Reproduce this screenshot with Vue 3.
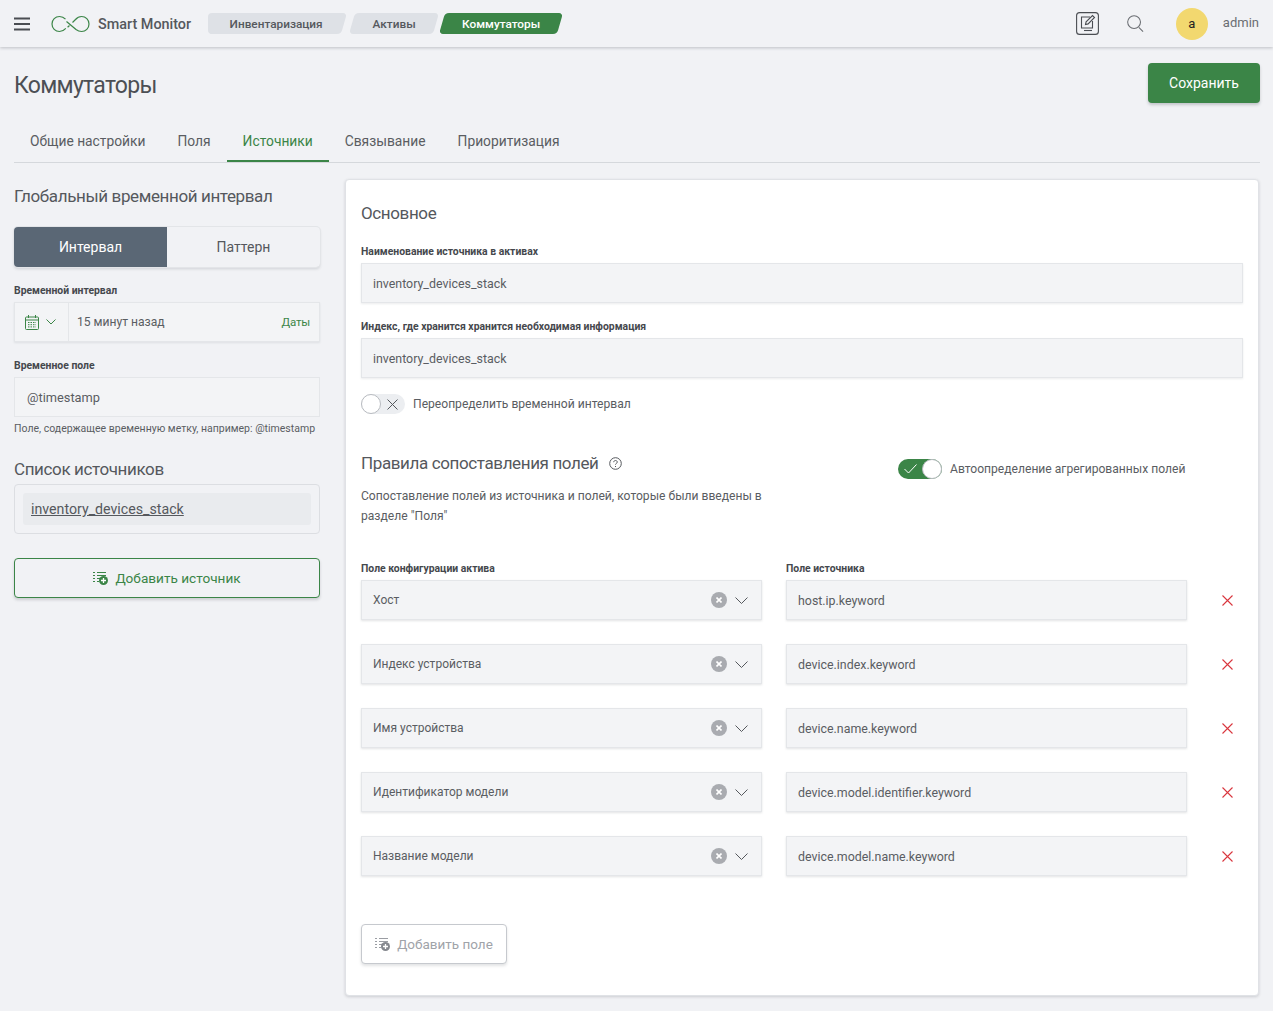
<script setup>
const tabs = ['Общие настройки', 'Поля', 'Источники', 'Связывание', 'Приоритизация']
const rows = [
  ['Хост', 'host.ip.keyword'],
  ['Индекс устройства', 'device.index.keyword'],
  ['Имя устройства', 'device.name.keyword'],
  ['Идентификатор модели', 'device.model.identifier.keyword'],
  ['Название модели', 'device.model.name.keyword'],
]
</script>

<template>
  <div class="page">
    <header class="topbar">
      <svg class="burger" width="16" height="14" viewBox="0 0 16 14"><path d="M0 1.500h16M0 7h16M0 12.500h16" stroke="#4a4d52" stroke-width="2"/></svg>
      <svg class="logo" width="41" height="18" viewBox="0 0 41 18" fill="none" stroke="#3b8547" stroke-width="1.200"><path d="M14.500 4.200C12.800 2.300 10.700 1.500 8.500 1.500 4.300 1.500 1 4.800 1 9s3.300 7.500 7.500 7.500c2.500 0 4.500-1.200 6.300-3.200"/><path d="M15.500 6.500l9.500 8c1.900 1.500 3.600 2 5.600 2 4.100 0 7.400-3.300 7.400-7.500S34.700 1.500 30.600 1.500c-2.500 0-4.400 1-6.100 3l-3 3"/><path d="M18.500 10.500l-1.900 1.800"/></svg>
      <span class="brand">Smart Monitor</span>
      <nav class="crumbs">
        <span class="crumb first">Инвентаризация</span>
        <span class="crumb mid">Активы</span>
        <span class="crumb active">Коммутаторы</span>
      </nav>
      <div class="top-right">
        <svg width="23" height="23" viewBox="0 0 23 23" fill="none" stroke="#4a4d52" stroke-width="1.100"><rect x=".6" y=".6" width="21.800" height="21.800" rx="3"/><path d="M14 5H5.500v11h11V9"/><path d="M9.500 12.500l.6-2.600 6.400-6.400 2 2-6.400 6.400z"/><path d="M8 18.500h8"/></svg>
        <svg class="search" width="17" height="17" viewBox="0 0 18 18" fill="none" stroke="#6a6d72" stroke-width="1.100"><circle cx="7.500" cy="7.500" r="6.800"/><path d="M12.500 13l4.500 4.500"/></svg>
        <span class="avatar">a</span>
        <span class="admin">admin</span>
      </div>
    </header>

    <main class="content">
      <div class="title-row">
        <h1>Коммутаторы</h1>
        <button class="save">Сохранить</button>
      </div>
      <div class="tabs">
        <span v-for="t in tabs" :key="t" class="tab" :class="{ on: t === 'Источники' }">{{ t }}</span>
      </div>

      <div class="columns">
        <aside class="left">
          <h2 class="side-head">Глобальный временной интервал</h2>
          <div class="segment">
            <span class="seg on">Интервал</span>
            <span class="seg">Паттерн</span>
          </div>
          <label class="lbl l1">Временной интервал</label>
          <div class="field picker">
            <span class="pick-btn">
              <svg width="14" height="15" viewBox="0 0 14 15" fill="none" stroke="#3b8547"><rect x=".5" y="2" width="13" height="12.500" rx="1"/><path d="M.5 5h13M3.500 0v3M10.500 0v3"/><path d="M3 7.500h8M3 9.700h8M3 11.900h8" stroke-dasharray="1.500 1"/></svg>
              <svg width="10" height="6" viewBox="0 0 10 6" fill="none" stroke="#3b8547"><path d="M.5.500L5 5 9.500.500"/></svg>
            </span>
            <span class="pick-text">15 минут назад</span>
            <span class="dates">Даты</span>
          </div>
          <label class="lbl l2">Временное поле</label>
          <div class="field plain">@timestamp</div>
          <p class="help">Поле, содержащее временную метку, например: @timestamp</p>
          <h2 class="side-head list-head">Список источников</h2>
          <div class="list-box"><div class="list-item"><span>inventory_devices_stack</span></div></div>
          <button class="add-source">
            <svg width="15" height="14" viewBox="0 0 15 14" fill="none" stroke="#3b8547"><path d="M0 1.500h2M4 1.500h9M0 4.500h2M4 4.500h9M0 7.500h2M0 10.500h2M4 7.500h3M4 10.500h2"/><circle cx="10.500" cy="9.500" r="4.500" fill="#3b8547" stroke="none"/><path d="M8 9.500h5M10.500 7v5" stroke="#fff" stroke-width="1.300"/></svg>
            Добавить источник
          </button>
        </aside>

        <section class="panel">
          <h3 class="panel-head">Основное</h3>
          <label class="lbl p1">Наименование источника в активах</label>
          <div class="field wide">inventory_devices_stack</div>
          <label class="lbl p2">Индекс, где хранится хранится необходимая информация</label>
          <div class="field wide">inventory_devices_stack</div>

          <div class="switch-row">
            <span class="switch off">
              <span class="knob"></span>
              <svg width="11" height="11" viewBox="0 0 11 11" fill="none" stroke="#55585d"><path d="M.5.500l10 10M10.500.500l-10 10"/></svg>
            </span>
            <span class="switch-text">Переопределить временной интервал</span>
          </div>

          <div class="rules">
            <div class="rules-left">
              <h3 class="panel-head rules-head">
                Правила сопоставления полей
                <svg width="13" height="13" viewBox="0 0 13 13" fill="none" stroke="#55585d"><circle cx="6.500" cy="6.500" r="5.800"/><path d="M4.700 5.200c0-1 .8-1.700 1.800-1.700s1.800.7 1.800 1.600c0 1.300-1.800 1.300-1.800 2.500"/><path d="M6.500 9v1"/></svg>
              </h3>
              <p class="desc">Сопоставление полей из источника и полей, которые были введены в разделе "Поля"</p>
            </div>
            <div class="auto">
              <span class="switch on">
                <svg width="13" height="10" viewBox="0 0 13 10" fill="none" stroke="#fff"><path d="M.5 5l4 4L12.500.500"/></svg>
                <span class="knob"></span>
              </span>
              <span class="switch-text">Автоопределение агрегированных полей</span>
            </div>
          </div>

          <div class="map-head">
            <label class="lbl">Поле конфигурации актива</label>
            <label class="lbl">Поле источника</label>
          </div>
          <div class="map">
            <template v-for="r in rows" :key="r[0]">
              <div class="field select">
                <span class="sel-text">{{ r[0] }}</span>
                <span class="clear"><svg width="6" height="6" viewBox="0 0 6 6" fill="none" stroke="#fff" stroke-width="1.600"><path d="M.5.500l5 5M5.500.500l-5 5"/></svg></span>
                <svg width="13" height="7" viewBox="0 0 13 7" fill="none" stroke="#55585d"><path d="M.5.500l6 6 6-6"/></svg>
              </div>
              <div class="field source">{{ r[1] }}</div>
              <span class="del"><svg width="11" height="11" viewBox="0 0 11 11" fill="none" stroke="#d9363e" stroke-width="1.100"><path d="M.5.500l10 10M10.500.500l-10 10"/></svg></span>
            </template>
          </div>

          <button class="add-field">
            <svg width="15" height="14" viewBox="0 0 15 14" fill="none" stroke="#9a9da3"><path d="M0 1.500h2M4 1.500h9M0 4.500h2M4 4.500h9M0 7.500h2M0 10.500h2M4 7.500h3M4 10.500h2"/><circle cx="10.500" cy="9.500" r="4.500" fill="#85888e" stroke="none"/><path d="M8 9.500h5M10.500 7v5" stroke="#fff" stroke-width="1.300"/></svg>
            Добавить поле
          </button>
        </section>
      </div>
    </main>
  </div>
</template>

<style>
html, body { margin: 0; background: #f1f2f5; }
</style>

<style scoped>
.page {
  min-height: 1011px;
  background: #f1f2f5;
  font-family: Roboto, "Noto Sans", sans-serif;
  font-size: 14px;
  color: #55585d;
  overflow: hidden;
}
h1, h2, h3, p { margin: 0; font-weight: 400; }
button { font-family: inherit; cursor: pointer; }

.topbar {
  height: 47px;
  box-sizing: border-box;
  display: flex;
  align-items: center;
  padding: 0 14px;
  background: #f1f2f5;
  box-shadow: 0 1px 3px rgba(60, 65, 75, .28);
  position: relative;
}
.burger { flex: none; }
.logo { margin-left: 21px; margin-top: 1px; flex: none; }
.brand { margin-left: 6px; margin-top: 1px; font-size: 14.400px; font-weight: 500; color: #55585d; white-space: nowrap; }
.crumbs { display: flex; margin-left: 17px; gap: 8px; }
.crumb {
  height: 21px;
  line-height: 23px;
  font-size: 11.800px;
  font-weight: 500;
  text-align: center;
  position: relative;
  z-index: 0;
  margin-top: -1px;
}
.crumb::before {
  content: "";
  position: absolute;
  inset: 0;
  background: #dee1e6;
  border-radius: 4px;
  transform: skewX(-16deg);
  z-index: -1;
}
.crumb.first { width: 136px; }
.crumb.first::before { left: 3px; }
.crumb.first::after {
  content: "";
  position: absolute;
  left: 0; top: 0; bottom: 0; width: 24px;
  background: #dee1e6;
  border-radius: 4px 0 0 4px;
  z-index: -1;
}
.crumb.mid { width: 84px; }
.crumb.active { width: 118px; margin-left: -2px; color: #fff; }
.crumb.active::before { background: #3b8547; }
.top-right { margin-left: auto; display: flex; align-items: center; }
.search { margin-left: 28px; margin-top: -1px; }
.avatar {
  width: 32px; height: 32px; border-radius: 50%;
  margin-left: 32px;
  background: #f2d86f;
  color: #222;
  font-size: 13px;
  display: flex; align-items: center; justify-content: center;
}
.admin { margin-left: 15px; font-size: 13px; color: #6a6d72; margin-top: -3px; }

.content { padding: 16px 13px 0 14px; }
.title-row { display: flex; justify-content: space-between; align-items: center; height: 40px; }
h1 { font-size: 23px; color: #4c4f54; margin-top: 4px; letter-spacing: -.7px; }
.save {
  width: 112px; height: 40px;
  background: #3b8547; color: #fff;
  border: none; border-radius: 4px;
  font-size: 14px;
  box-shadow: 0 2px 3px rgba(60, 65, 75, .25);
}
.tabs {
  margin-top: 19px;
  height: 40px;
  display: flex;
  border-bottom: 1px solid #d5d8dc;
}
.tab {
  padding: 0 16px;
  line-height: 38px;
  font-size: 13.800px;
  color: #5a5d62;
  height: 40px;
  box-sizing: border-box;
}
.tab.on { color: #3b8547; border-bottom: 2px solid #3b8547; }

.columns { display: flex; align-items: flex-start; gap: 25px; margin-top: 16px; }
.left { width: 306px; flex: none; }
.side-head { font-size: 17px; color: #55585d; line-height: 24px; margin-top: 5px; letter-spacing: -.38px; }
.segment {
  margin-top: 19px;
  height: 40px;
  display: flex;
  border-radius: 4px;
  overflow: hidden;
  box-shadow: 0 0 0 1px #e3e5e8, 0 2px 3px rgba(60, 65, 75, .18);
}
.seg { flex: 1; display: flex; align-items: center; justify-content: center; font-size: 14px; color: #55585d; }
.seg.on { background: #5a6775; color: #fff; }
.lbl { display: block; font-size: 10.400px; font-weight: 700; color: #45484d; line-height: 14px; }
.l1 { margin-top: 17px; }
.l2 { margin-top: 17px; }
.field {
  height: 40px;
  box-sizing: border-box;
  background: #f3f4f6;
  border: 1px solid #e4e6e9;
  display: flex;
  align-items: center;
  font-size: 12.400px;
  color: #5a5d62;
}
.picker { margin-top: 4px; box-shadow: 0 1px 2px rgba(60, 65, 75, .1); }
.pick-btn {
  width: 54px; height: 100%;
  box-sizing: border-box;
  border-right: 1px solid #e4e6e9;
  display: flex; align-items: center; gap: 7px;
  padding-left: 10px;
}
.pick-text { margin-left: 8px; font-size: 12.100px; }
.dates { margin-left: auto; margin-right: 9px; font-size: 11.500px; letter-spacing: -.2px; color: #3b8547; }
.plain { margin-top: 4px; padding-left: 12px; font-size: 12.800px; }
.help { font-size: 10.500px; color: #5a5d62; line-height: 14px; margin-top: 5px; white-space: nowrap; }
.list-head { margin-top: 21px; margin-bottom: 0; }
.list-box {
  margin-top: 3px;
  height: 50px; box-sizing: border-box;
  border: 1px solid #dcdee2;
  border-radius: 4px;
  padding: 8px;
}
.list-item {
  height: 32px;
  background: #e9ebee;
  border-radius: 3px;
  padding-left: 8px;
  line-height: 32px;
  font-size: 14.200px;
  color: #55585d;
}
.list-item span { text-decoration: underline; }
.add-source {
  margin-top: 24px;
  width: 306px; height: 40px;
  background: #f1f2f5;
  border: 1px solid #3b8547;
  border-radius: 4px;
  color: #3b8547;
  font-size: 13.600px;
  display: flex; align-items: center; justify-content: center; gap: 7px;
  box-shadow: 0 2px 3px rgba(60, 65, 75, .2);
}

.panel {
  flex: none;
  width: 914px;
  background: #fff;
  border: 1px solid #e0e2e6;
  border-radius: 4px;
  box-shadow: 0 1px 3px rgba(60, 65, 75, .2);
  height: 817px;
  box-sizing: border-box;
  padding: 21px 15px 0;
}
.panel-head { font-size: 17px; line-height: 24px; color: #55585d; letter-spacing: -.38px; }
.p1 { margin-top: 20px; }
.p2 { margin-top: 17px; }
.wide { margin-top: 4px; padding-left: 11px; box-shadow: 0 1px 2px rgba(60, 65, 75, .1); }
.switch-row { display: flex; align-items: center; margin-top: 15px; height: 22px; }
.switch {
  width: 44px; height: 20px;
  border-radius: 10px;
  display: flex; align-items: center;
  box-sizing: border-box;
  flex: none;
}
.switch.off { background: #eceef1; gap: 6px; }
.switch.on { background: #3b8547; justify-content: space-between; padding-left: 6px; }
.knob {
  width: 20px; height: 20px;
  box-sizing: border-box;
  background: #fff;
  border: 1px solid #b8bbc0;
  border-radius: 50%;
}
.switch-text { margin-left: 8px; font-size: 12.100px; color: #5a5d62; }
.rules { display: flex; margin-top: 36px; height: 78px; }
.rules-left { width: 537px; flex: none; }
.rules-head { display: flex; align-items: center; gap: 10px; }
.desc { width: 402px; margin-top: 11px; font-size: 12.100px; line-height: 20px; color: #5a5d62; }
.auto { display: flex; align-items: center; height: 20px; margin-top: 8px; }
.map-head {
  margin-top: 33px;
  margin-bottom: 4px;
  display: grid;
  grid-template-columns: 401px 401px;
  column-gap: 24px;
}
.map {
  display: grid;
  grid-template-columns: 401px 401px 1fr;
  column-gap: 24px;
  row-gap: 24px;
  align-items: center;
}
.select { padding: 0 13px 0 11px; font-size: 12px; box-shadow: 0 1px 2px rgba(60, 65, 75, .15); }
.sel-text { flex: 1; }
.clear {
  width: 16px; height: 16px; border-radius: 50%;
  background: #a9abb0;
  display: flex; align-items: center; justify-content: center;
  margin-right: 8px;
}
.source { padding-left: 11px; box-shadow: 0 1px 2px rgba(60, 65, 75, .15); }
.del { display: flex; padding-left: 11px; }
.add-field {
  margin-top: 48px;
  width: 146px; height: 40px;
  background: #fff;
  border: 1px solid #c6c9ce;
  border-radius: 4px;
  color: #a0a3a9;
  font-size: 13.500px;
  display: flex; align-items: center; justify-content: center; gap: 7px;
  box-shadow: 0 2px 3px rgba(60, 65, 75, .15);
}
</style>
